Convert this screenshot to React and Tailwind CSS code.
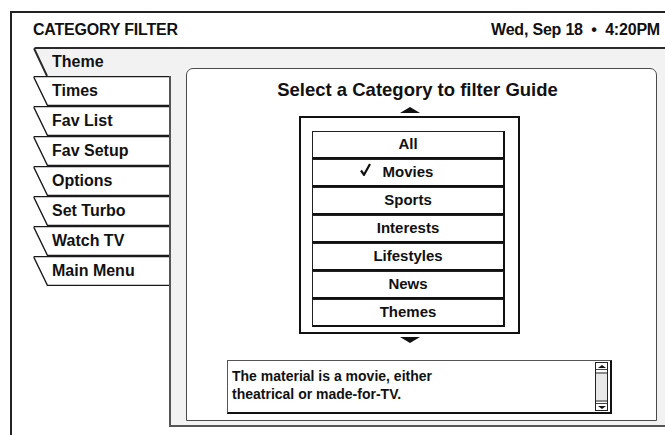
const tabs = ['Times', 'Fav List', 'Fav Setup', 'Options', 'Set Turbo', 'Watch TV', 'Main Menu']
const categories = ['All', 'Movies', 'Sports', 'Interests', 'Lifestyles', 'News', 'Themes']

function Tab({ label }) {
  return (
    <div className="relative ml-[21px] h-[30px] w-[136px] flex items-center pl-[19px] text-[16px] font-bold">
      <svg className="absolute left-0 top-0" width="136" height="30">
        <path d="M2 0.5 H136 V29.5 H14.5 L1.2 2 Q0.8 0.5 2 0.5 Z" fill="#fff" />
        <path d="M136 0.5 H2 Q0.8 0.5 1.2 2 L14.5 29.5 H136" fill="none" stroke="#1a1a1a" strokeWidth="1.4" />
      </svg>
      <span className="relative">{label}</span>
    </div>
  )
}

function ThemeTab() {
  return (
    <div className="relative ml-[21px] h-[29px] w-[138px] flex items-center pl-[19px] text-[16px] font-bold">
      <svg className="absolute left-0 top-0" width="138" height="29">
        <path d="M3 1 H138 V29 H14 L1.5 2.5 Q1.2 1 3 1 Z" fill="#f2f2f2" />
        <path d="M138 1 H3 Q1.2 1 1.5 2.5 L14 29" fill="none" stroke="#2a2a2a" strokeWidth="2" />
      </svg>
      <span className="relative">Theme</span>
    </div>
  )
}

export default function App() {
  return (
    <div className="w-[665px] h-[435px] overflow-hidden bg-white text-[#111] font-['Liberation_Sans',Arial,sans-serif]">
      <div className="ml-[10px] mt-[11px] h-[424px] w-[655px] border-l-2 border-t-2 border-[#222]">
        {/* header */}
        <div className="h-[34px] flex items-center justify-between pl-[21px] pr-[5px] text-[16px] font-bold tracking-[-0.2px]">
          <span>CATEGORY FILTER</span>
          <span>Wed, Sep 18 &nbsp;•&nbsp; 4:20PM</span>
        </div>

        <div className="flex h-[380px]">
          {/* tab column */}
          <div className="w-[159px] flex flex-col">
            <ThemeTab />
            <div className="flex-1 border-r-2 border-[#555]">
              {tabs.map(t => (
                <Tab key={t} label={t} />
              ))}
            </div>
          </div>

          {/* content area */}
          <div className="flex-1 bg-[#f2f2f2] border-t-2 border-b-2 border-t-[#2a2a2a] border-b-[#555] pl-[15px] pt-[19px]">
            <div className="w-[471px] h-[353px] bg-white border border-[#4a4a4a] rounded-t-[7px] flex flex-col">
              <h1 className="mt-[10px] pr-[8px] text-center text-[18.5px] leading-[22px] font-bold">
                Select a Category to filter Guide
              </h1>

              <div className="ml-[213px] mt-[6px] w-0 h-0 border-x-[10px] border-x-transparent border-b-[6px] border-b-[#111]" />

              <div className="ml-[112px] mt-[3px] w-[221px] h-[218px] border-2 border-[#111] pt-[13px] pl-[11px]">
                {categories.map(c => (
                  <div
                    key={c}
                    className="w-[193px] h-[28px] border border-[#222] border-b-2 border-r-2 border-b-[#111] border-r-[#111] flex items-center justify-center text-[15px] font-bold"
                  >
                    <span className="relative">
                      {c === 'Movies' && (
                        <svg className="absolute right-full mr-[12px] top-[2px]" width="11" height="13" viewBox="0 0 11 13">
                          <path d="M1 7.5 L4 11.8 L10 1" fill="none" stroke="#111" strokeWidth="2.2" strokeLinejoin="miter" />
                        </svg>
                      )}
                      {c}
                    </span>
                  </div>
                ))}
              </div>

              <div className="ml-[213px] mt-[3px] w-0 h-0 border-x-[10px] border-x-transparent border-t-[6px] border-t-[#111]" />

              <div className="ml-[40px] mt-[17px] w-[385px] h-[54px] flex border-t border-l border-[#555] border-b-2 border-r-2 border-b-[#111] border-r-[#111]">
                <p className="flex-1 pl-[4px] pt-[6px] text-[14px] leading-[18px] font-bold">
                  The material is a movie, either
                  <br />
                  theatrical or made-for-TV.
                </p>
                <div className="w-[13px] my-[1px] mr-[2px] flex flex-col border border-[#222] bg-white">
                  <div className="h-[7px] flex items-center justify-center border-b border-[#444]">
                    <div className="w-0 h-0 border-x-[4px] border-x-transparent border-b-[3px] border-b-[#111]" />
                  </div>
                  <div className="flex-1 mt-[2px] mb-[1px] bg-[#e8e8e8] border-y-2 border-[#8a8a8a]" />
                  <div className="h-[7px] flex items-center justify-center border-t border-[#444]">
                    <div className="w-0 h-0 border-x-[4px] border-x-transparent border-t-[3px] border-t-[#111]" />
                  </div>
                </div>
              </div>
            </div>
          </div>
        </div>
      </div>
    </div>
  )
}
